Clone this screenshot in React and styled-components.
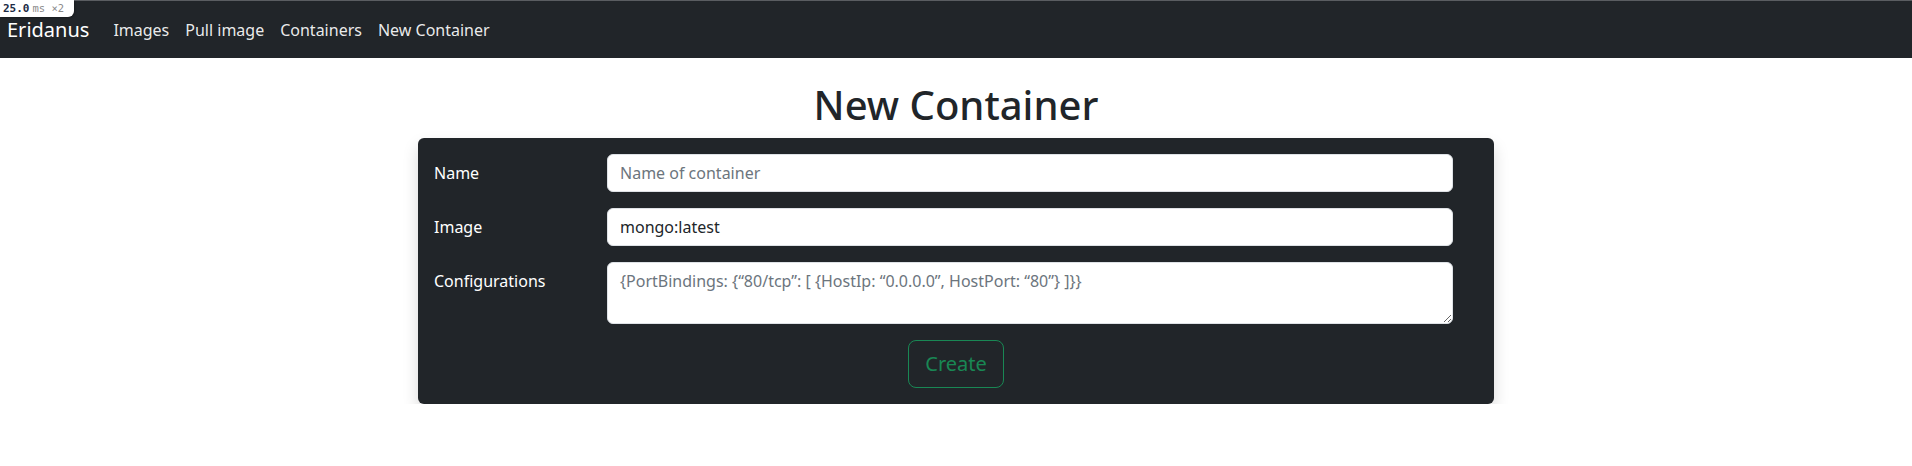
import React from "react";
import styled, { createGlobalStyle } from "styled-components";

const Global = createGlobalStyle`
  *, *::before, *::after { box-sizing: border-box; }
  body {
    margin: 0;
    background: #fff;
    font-family: "Noto Sans", "Liberation Sans", sans-serif;
    font-size: 16px;
    line-height: 1.5;
    color: #212529;
  }
`;

const Navbar = styled.nav`
  display: flex;
  align-items: center;
  height: 58px;
  padding: 8px 7px;
  background: #212529;
  border-top: 1px solid #5a5d61;
`;

const Brand = styled.a`
  font-size: 20px;
  line-height: 30px;
  padding: 5px 0;
  margin-right: 16px;
  color: #fff;
  text-decoration: none;
`;

const NavList = styled.div`
  display: flex;
`;

const NavLink = styled.a`
  padding: 8px;
  line-height: 24px;
  color: rgba(255, 255, 255, 0.92);
  text-decoration: none;
`;

const Meter = styled.div`
  position: absolute;
  top: 0;
  left: 0;
  display: flex;
  align-items: baseline;
  gap: 3px;
  height: 17px;
  padding: 0 10px 0 3px;
  background: #fff;
  border-radius: 0 0 6px 0;
  box-shadow: 1px 1px 2px rgba(0, 0, 0, 0.25);
  font-family: "DejaVu Sans Mono", "Liberation Mono", monospace;
  line-height: 17px;
`;

const MeterValue = styled.span`
  font-size: 11px;
  font-weight: bold;
  color: #1c2b45;
`;

const MeterUnit = styled.span`
  font-size: 10.5px;
  color: #8a8a8a;
`;

const Title = styled.h1`
  margin: 23px 0 9px;
  text-align: center;
  font-size: 40px;
  font-weight: 500;
  line-height: 1.2;
  color: #212529;
`;

const Card = styled.div`
  width: 1076px;
  margin: 0 auto;
  padding: 16px;
  background: #212529;
  border-radius: 6px;
  box-shadow: 0 8px 16px rgba(0, 0, 0, 0.15);
`;

const Form = styled.div`
  display: grid;
  grid-template-columns: 173px 1fr;
  row-gap: 16px;
  padding-right: 25px;
`;

const Label = styled.label`
  padding-top: 7px;
  color: #fff;
  line-height: 24px;
`;

const fieldCss = `
  display: block;
  width: 100%;
  padding: 6px 12px;
  font-family: "Noto Sans", "Liberation Sans", sans-serif;
  font-size: 16px;
  line-height: 24px;
  color: #212529;
  background: #fff;
  border: 1px solid #dee2e6;
  border-radius: 6px;
  outline: none;
  &::placeholder { color: #6c757d; opacity: 1; }
`;

const Input = styled.input`
  ${fieldCss}
  height: 38px;
`;

const TextArea = styled.textarea`
  ${fieldCss}
  height: 62px;
  resize: vertical;
`;

const Actions = styled.div`
  display: flex;
  justify-content: center;
  margin-top: 16px;
`;

const Button = styled.button`
  padding: 8px 16px;
  font-family: "Noto Sans", "Liberation Sans", sans-serif;
  font-size: 20px;
  line-height: 30px;
  color: #198754;
  background: transparent;
  border: 1px solid #198754;
  border-radius: 8px;
  cursor: pointer;
`;

export default function App() {
  return (
    <>
      <Global />
      <Navbar>
        <Brand href="#">Eridanus</Brand>
        <NavList>
          <NavLink href="#">Images</NavLink>
          <NavLink href="#">Pull image</NavLink>
          <NavLink href="#">Containers</NavLink>
          <NavLink href="#">New Container</NavLink>
        </NavList>
      </Navbar>
      <Meter>
        <MeterValue>25.0</MeterValue>
        <MeterUnit>ms ×2</MeterUnit>
      </Meter>
      <main>
        <Title>New Container</Title>
        <Card>
          <Form>
            <Label htmlFor="name">Name</Label>
            <Input id="name" placeholder="Name of container" />
            <Label htmlFor="image">Image</Label>
            <Input id="image" defaultValue="mongo:latest" />
            <Label htmlFor="config">Configurations</Label>
            <TextArea
              id="config"
              rows={2}
              placeholder={'{PortBindings: {\u201c80/tcp\u201d: [ {HostIp: \u201c0.0.0.0\u201d, HostPort: \u201c80\u201d} ]}}'}
            />
          </Form>
          <Actions>
            <Button type="button">Create</Button>
          </Actions>
        </Card>
      </main>
    </>
  );
}
